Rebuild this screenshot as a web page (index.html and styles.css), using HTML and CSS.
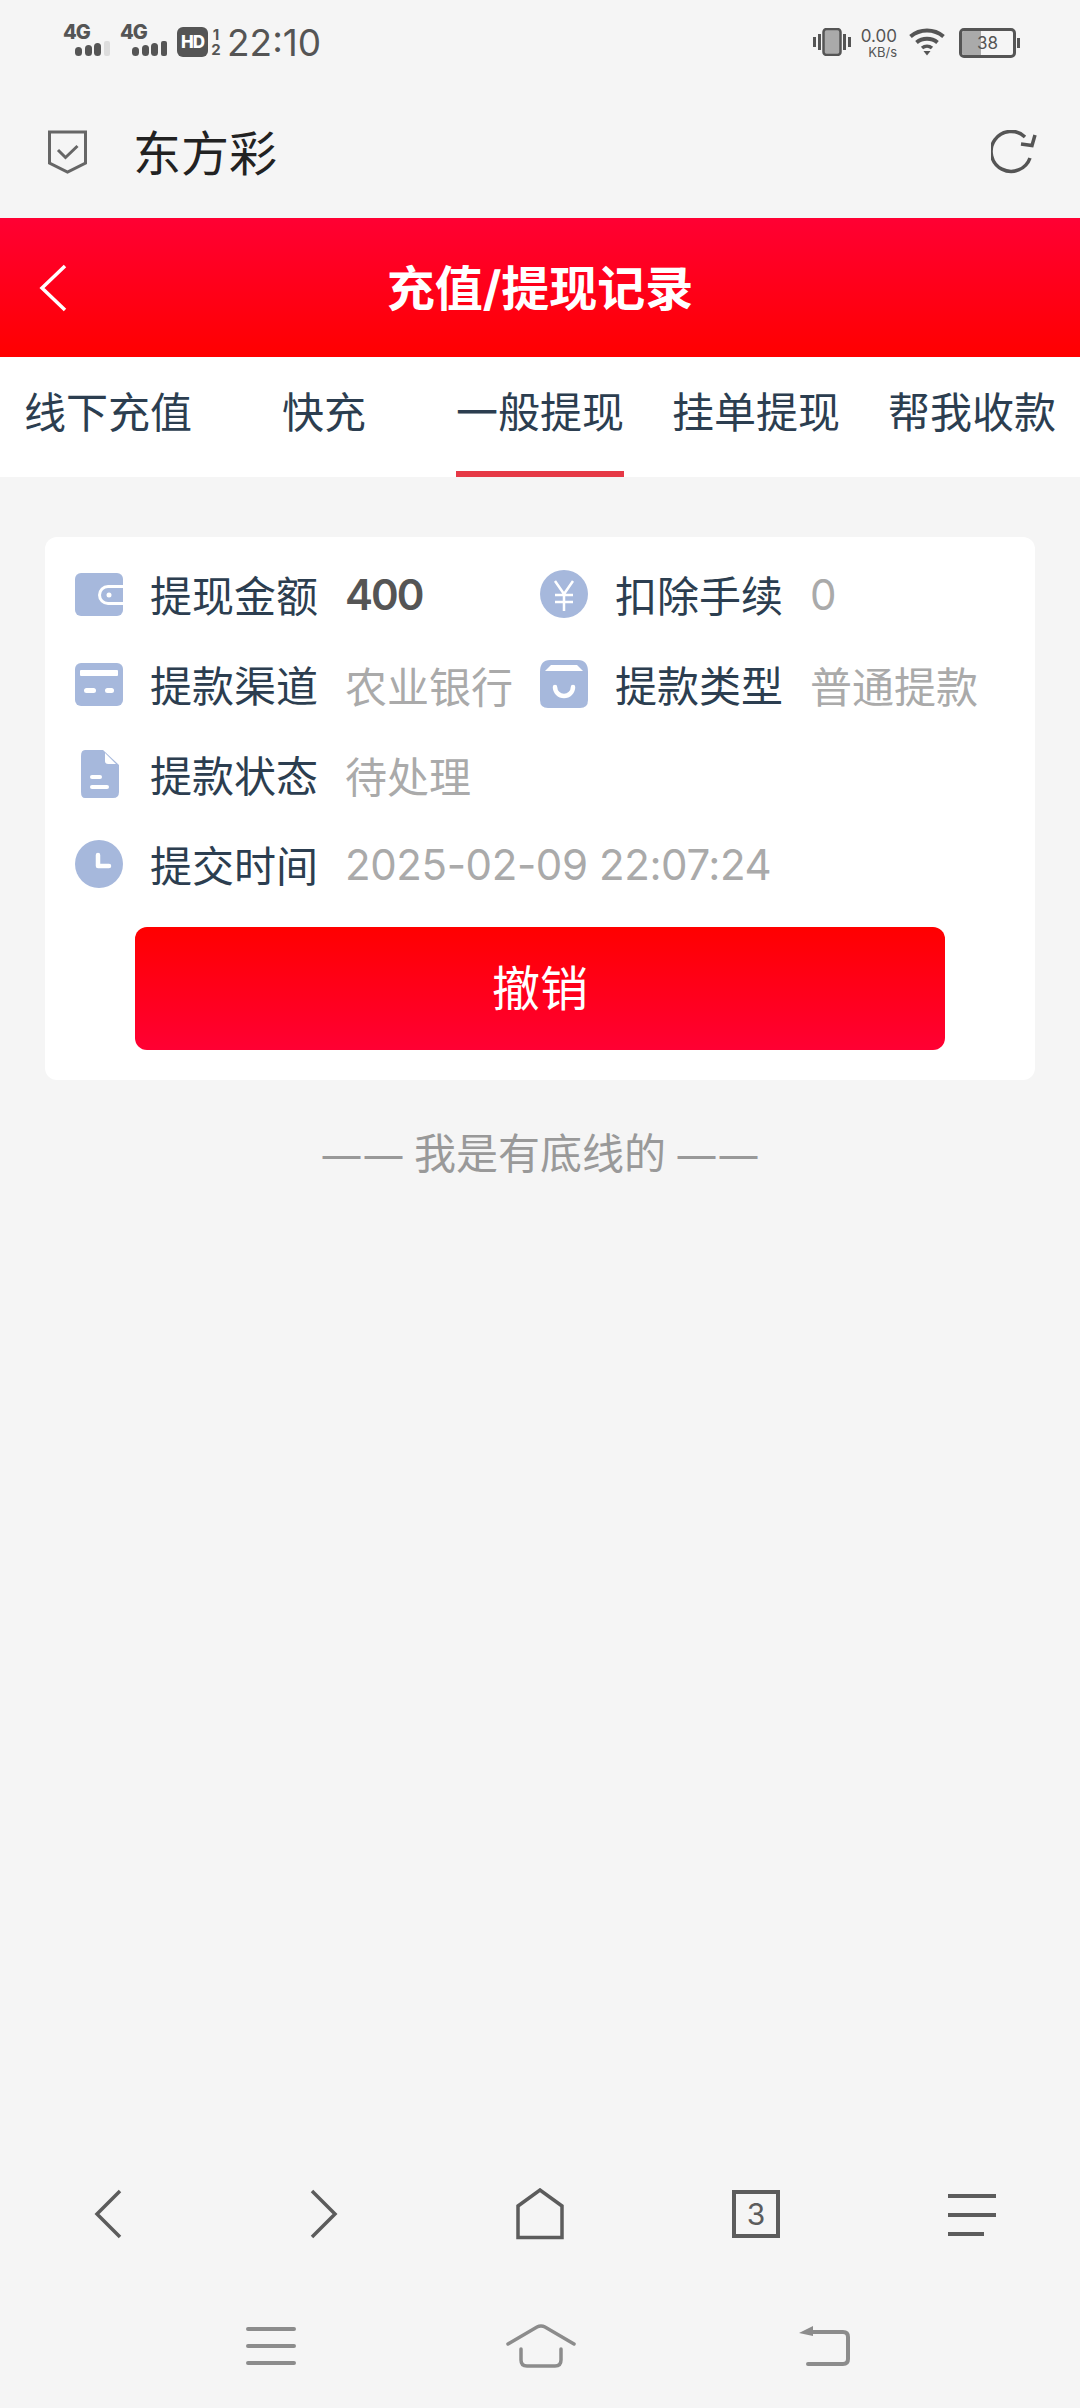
FILE: index.html
```html
<!DOCTYPE html>
<html lang="zh-CN">
<head>
    <meta charset="UTF-8">
    <meta name="viewport" content="width=device-width, initial-scale=1.0">
    <title>充值/提现记录</title>
    <link rel="stylesheet" href="styles.css">
</head>
<body>
<div class="page">
    <div class="statusbar">
        <div class="status-left">
            <div class="signal">
                <span class="signal-type">4G</span>
                <svg class="signal-bars" width="36" height="16" viewBox="0 0 36 16">
                    <rect x="0" y="6" width="7" height="9" rx="3.500" fill="#555"/>
                    <rect x="10" y="4" width="7" height="11" rx="3.500" fill="#555"/>
                    <rect x="19" y="2" width="7" height="13" rx="3.500" fill="#555"/>
                    <rect x="29" y="0" width="6" height="15" rx="2" fill="#ddd"/>
                </svg>
            </div>
            <div class="signal">
                <span class="signal-type">4G</span>
                <svg class="signal-bars" width="36" height="16" viewBox="0 0 36 16">
                    <rect x="0" y="6" width="7" height="9" rx="3.500" fill="#555"/>
                    <rect x="10" y="4" width="7" height="11" rx="3.500" fill="#555"/>
                    <rect x="19" y="2" width="7" height="13" rx="3.500" fill="#555"/>
                    <rect x="29" y="0" width="6" height="15" rx="2" fill="#555"/>
                </svg>
            </div>
            <span class="hd">HD</span>
            <span class="sim"><span>1</span><span>2</span></span>
            <span class="clock">22:10</span>
        </div>
        <div class="status-right">
            <svg width="38" height="28" viewBox="0 0 38 28">
                <rect x="0" y="9" width="3" height="10" fill="#555"/>
                <rect x="5" y="6" width="3" height="16" fill="#555"/>
                <rect x="10.500" y="1" width="17" height="26" rx="3" fill="#aaa" stroke="#555" stroke-width="2.500"/>
                <rect x="30" y="6" width="3" height="16" fill="#555"/>
                <rect x="35" y="9" width="3" height="10" fill="#555"/>
            </svg>
            <div class="speed">
                <span class="speed-num">0.00</span>
                <span class="speed-unit">KB/s</span>
            </div>
            <svg class="wifi" width="36" height="28" viewBox="0 0 36 28">
                <path d="M1.500 8.500 C11 0.500 25 0.500 34.500 8.500" fill="none" stroke="#555" stroke-width="4"/>
                <path d="M7.500 14.500 C13.500 9.500 22.500 9.500 28.500 14.500" fill="none" stroke="#555" stroke-width="4"/>
                <path d="M13 20 C16 17.500 20 17.500 23 20" fill="none" stroke="#555" stroke-width="3.500"/>
                <path d="M14.500 23 L21.500 23 L18 27.500 Z" fill="#555"/>
            </svg>
            <div class="battery">
                <div class="battery-body">
                    <div class="battery-fill"></div>
                    <span class="battery-num">38</span>
                </div>
                <div class="battery-nub"></div>
            </div>
        </div>
    </div>

    <div class="browserbar">
        <svg class="shield" width="39" height="44" viewBox="0 0 39 44">
            <path d="M1.500 2 H37.500 V33 L19.500 42 L1.500 33 Z" fill="none" stroke="#666" stroke-width="3"/>
            <path d="M10 20 L17.500 27.500 L29.500 16" fill="none" stroke="#666" stroke-width="3"/>
        </svg>
        <span class="site-name">东方彩</span>
        <svg class="reload" width="46" height="44" viewBox="0 0 46 44">
            <path d="M39 28 A20 20 0 1 1 34 7" fill="none" stroke="#555" stroke-width="3.500"/>
            <path d="M30 14 L41 15.500 L44 5" fill="none" stroke="#555" stroke-width="3.500"/>
        </svg>
    </div>

    <header class="header">
        <svg class="back" width="30" height="48" viewBox="0 0 30 48">
            <path d="M27 2 L4 24 L27 46" fill="none" stroke="#fff" stroke-width="3.500"/>
        </svg>
        <h1>充值/提现记录</h1>
    </header>

    <nav class="tabs">
        <a class="tab">线下充值</a>
        <a class="tab">快充</a>
        <a class="tab active">一般提现</a>
        <a class="tab">挂单提现</a>
        <a class="tab">帮我收款</a>
    </nav>

    <section class="card">
        <div class="info-grid">
            <div class="info">
                <svg class="icon" width="48" height="43" viewBox="0 0 48 43">
                    <rect width="48" height="43" rx="6" fill="#a6b8dc"/>
                    <path d="M48 12 H33 A8 8 0 0 0 33 32 H48" fill="#fff"/>
                    <path d="M48 15 H33 A5 5 0 0 0 33 29 H48 Z" fill="#a6b8dc"/>
                    <circle cx="34" cy="22" r="2.500" fill="#fff"/>
                </svg>
                <span class="label">提现金额</span>
                <span class="value strong">400</span>
            </div>
            <div class="info">
                <svg class="icon" width="48" height="48" viewBox="0 0 48 48">
                    <circle cx="24" cy="24" r="24" fill="#a6b8dc"/>
                    <path d="M15 11 L24 24 L33 11 M15 25 H33 M15 32 H33 M24 24 V41" fill="none" stroke="#fff" stroke-width="2.500"/>
                </svg>
                <span class="label">扣除手续</span>
                <span class="value">0</span>
            </div>
            <div class="info">
                <svg class="icon" width="48" height="43" viewBox="0 0 48 43">
                    <rect width="48" height="43" rx="6" fill="#a6b8dc"/>
                    <rect x="5" y="7" width="38" height="6" rx="1" fill="#fff"/>
                    <rect x="9" y="25" width="12" height="5" rx="2.500" fill="#fff"/>
                    <rect x="30" y="25" width="9" height="5" rx="2.500" fill="#fff"/>
                </svg>
                <span class="label">提款渠道</span>
                <span class="value">农业银行</span>
            </div>
            <div class="info">
                <svg class="icon" width="48" height="48" viewBox="0 0 48 48">
                    <path d="M10 0 H38 Q48 0 48 12 V40 Q48 48 40 48 H8 Q0 48 0 40 V12 Q0 0 10 0 Z" fill="#a6b8dc"/>
                    <path d="M5 11 L11 5 H37 L43 11 Z" fill="#fff"/>
                    <path d="M15 27 A9 9 0 0 0 33 27" fill="none" stroke="#fff" stroke-width="4.500" stroke-linecap="round"/>
                </svg>
                <span class="label">提款类型</span>
                <span class="value">普通提款</span>
            </div>
            <div class="info wide">
                <svg class="icon" width="48" height="48" viewBox="0 0 48 48">
                    <path d="M10 0 H28 L44 15 V42 Q44 48 38 48 H10 Q6 48 6 42 V6 Q6 0 10 0 Z" fill="#a6b8dc"/>
                    <path d="M30 3 L41 14 H33 Q30 14 30 11 Z" fill="#fff"/>
                    <rect x="15" y="25" width="12" height="4" rx="2" fill="#fff"/>
                    <rect x="15" y="35" width="19" height="4" rx="2" fill="#fff"/>
                </svg>
                <span class="label">提款状态</span>
                <span class="value">待处理</span>
            </div>
            <div class="info wide">
                <svg class="icon" width="48" height="48" viewBox="0 0 48 48">
                    <circle cx="24" cy="24" r="24" fill="#a6b8dc"/>
                    <path d="M23 15 V26 H34" fill="none" stroke="#fff" stroke-width="4.500" stroke-linecap="round" stroke-linejoin="round"/>
                </svg>
                <span class="label">提交时间</span>
                <span class="value date">2025-02-09 22:07:24</span>
            </div>
        </div>
        <button class="cancel-btn"><span>撤销</span></button>
    </section>

    <p class="bottom-line"><span class="dash">——</span> 我是有底线的 <span class="dash">——</span></p>

    <div class="toolbar">
        <svg width="30" height="50" viewBox="0 0 30 50">
            <path d="M27 2 L4 25 L27 48" fill="none" stroke="#5c5c5c" stroke-width="3.500"/>
        </svg>
        <svg width="30" height="50" viewBox="0 0 30 50">
            <path d="M3 2 L26 25 L3 48" fill="none" stroke="#5c5c5c" stroke-width="3.500"/>
        </svg>
        <svg width="48" height="52" viewBox="0 0 48 52">
            <path d="M2 18 L24 2 L46 18 V49.500 H2 Z" fill="none" stroke="#5c5c5c" stroke-width="3.500"/>
        </svg>
        <div class="tab-count">3</div>
        <svg width="48" height="44" viewBox="0 0 48 44">
            <rect y="2" width="48" height="4" fill="#5c5c5c"/>
            <rect y="21" width="48" height="4" fill="#5c5c5c"/>
            <rect y="40" width="36" height="4" fill="#5c5c5c"/>
        </svg>
    </div>

    <div class="navbar">
        <svg width="50" height="38" viewBox="0 0 50 38">
            <path d="M2 2 H48 M2 19 H48 M2 36 H48" stroke="#8c8c8c" stroke-width="4" stroke-linecap="round"/>
        </svg>
        <svg width="70" height="44" viewBox="0 0 70 44">
            <path d="M2 20 L31 3 Q35 1 39 3 L68 20" fill="none" stroke="#8c8c8c" stroke-width="3.500" stroke-linecap="round"/>
            <path d="M15 25 V36 Q15 42 21 42 H49 Q55 42 55 36 V25" fill="none" stroke="#8c8c8c" stroke-width="3.500" stroke-linecap="round"/>
        </svg>
        <svg width="52" height="42" viewBox="0 0 52 42">
            <path d="M10 7 H45 Q50 7 50 12 V34 Q50 39 45 39 H10" fill="none" stroke="#8c8c8c" stroke-width="4" stroke-linecap="round"/>
            <path d="M1 8 L15 1 V11 Z" fill="#8c8c8c"/>
        </svg>
    </div>
</div>
</body>
</html>
```

FILE: styles.css
```css
* {
    margin: 0;
    padding: 0;
    box-sizing: border-box;
}
body {
    background-color: #f5f5f5;
    font-family: Inter, "Noto Sans CJK SC", sans-serif;
}
.page {
    display: flex;
    flex-direction: column;
    width: 1080px;
    height: 2408px;
    overflow: hidden;
}

/* status bar */
.statusbar {
    display: flex;
    justify-content: space-between;
    align-items: flex-start;
    height: 85px;
    padding: 24px 60px 0 63px;
    color: #555;
}
.status-left,
.status-right {
    display: flex;
    align-items: flex-start;
}
.signal {
    display: flex;
    flex-direction: column;
    width: 48px;
    margin-right: 9px;
}
.signal-type {
    font-size: 20px;
    line-height: 17px;
    font-weight: 800;
    letter-spacing: -1px;
}
.signal-bars {
    margin-left: 12px;
}
.hd {
    width: 31px;
    height: 30px;
    margin-top: 3px;
    border-radius: 6px;
    background-color: #555;
    color: #fff;
    font-size: 17px;
    line-height: 30px;
    font-weight: 800;
    text-align: center;
    letter-spacing: -1px;
}
.sim {
    display: flex;
    flex-direction: column;
    align-items: center;
    width: 14px;
    margin: 3px 4px 0 1px;
    font-size: 15px;
    line-height: 15px;
    font-weight: 700;
}
.clock {
    font-size: 37px;
    line-height: 38px;
}
.status-right {
    padding-top: 4px;
}
.speed {
    display: flex;
    flex-direction: column;
    align-items: flex-end;
    width: 38px;
    margin: 0 12px 0 8px;
}
.speed-num {
    font-size: 17px;
    line-height: 17px;
}
.speed-unit {
    font-size: 13px;
    line-height: 15px;
}
.wifi {
    margin-right: 14px;
}
.battery {
    display: flex;
    align-items: center;
}
.battery-body {
    position: relative;
    width: 57px;
    height: 30px;
    border: 3px solid #555;
    border-radius: 5px;
    overflow: hidden;
}
.battery-fill {
    width: 19px;
    height: 100%;
    background-color: #aaa;
}
.battery-num {
    position: absolute;
    top: 0;
    left: 15px;
    font-size: 17px;
    line-height: 24px;
}
.battery-nub {
    width: 3px;
    height: 10px;
    margin-left: 1px;
    background-color: #555;
}

/* browser bar */
.browserbar {
    display: flex;
    align-items: center;
    height: 133px;
    padding: 0 43px 0 48px;
}
.shield {
    margin-right: 46px;
}
.site-name {
    flex: 1;
    margin-top: -4px;
    font-size: 48px;
    color: #222;
}

/* red header */
.header {
    display: grid;
    grid-template-columns: 110px 1fr 110px;
    align-items: center;
    height: 139px;
    background: linear-gradient(#ff0033, #ff0000);
    color: #fff;
}
.back {
    margin-left: 38px;
}
.header h1 {
    margin-top: -5px;
    font-size: 48px;
    font-weight: 700;
    text-align: center;
}

/* tabs */
.tabs {
    display: grid;
    grid-template-columns: repeat(5, 216px);
    justify-content: center;
    height: 120px;
    background-color: #fff;
}
.tab {
    justify-self: center;
    height: 120px;
    font-size: 42px;
    line-height: 112px;
    color: #2c3e50;
}
.tab.active {
    border-bottom: 6px solid #e63946;
}

/* record card */
.card {
    margin: 60px 45px 0;
    padding: 28px 30px 30px;
    height: 543px;
    border-radius: 12px;
    background-color: #fff;
}
.info-grid {
    display: grid;
    grid-template-columns: 465px 1fr;
    grid-auto-rows: 90px;
}
.info {
    display: flex;
    align-items: center;
    height: 58px;
}
.info.wide {
    grid-column: 1 / 3;
}
.icon {
    flex: none;
    margin-right: 27px;
}
.label {
    margin-right: 27px;
    margin-bottom: 2px;
    font-size: 42px;
    color: #2c3e50;
    white-space: nowrap;
}
.value {
    font-size: 42px;
    color: #aaa;
    white-space: nowrap;
}
.value.strong {
    color: #555;
    font-weight: 600;
    letter-spacing: -2px;
}
.value.date {
    letter-spacing: -0.4px;
}
.cancel-btn {
    display: block;
    width: 810px;
    height: 123px;
    margin: 2px auto 0;
    border: none;
    border-radius: 12px;
    background: linear-gradient(#ff0000, #ff0033);
    color: #fff;
    font-family: inherit;
    font-size: 48px;
}
.cancel-btn span {
    display: block;
    margin-top: -7px;
}

/* footer note */
.bottom-line {
    margin-top: 41px;
    font-family: "Noto Sans CJK SC", sans-serif;
    font-size: 42px;
    line-height: 60px;
    color: #999;
    text-align: center;
}
.dash {
    font-family: "DejaVu Sans", sans-serif;
}

/* bottom toolbars */
.toolbar {
    display: grid;
    grid-template-columns: repeat(5, 216px);
    justify-items: center;
    align-items: center;
    margin-top: auto;
    margin-bottom: 20px;
    height: 100px;
}
.tab-count {
    width: 48px;
    height: 48px;
    border: 4px solid #5c5c5c;
    font-size: 30px;
    line-height: 40px;
    color: #5c5c5c;
    text-align: center;
}
.navbar {
    display: flex;
    align-items: center;
    height: 124px;
    padding-left: 246px;
}
.navbar svg:nth-child(1) {
    margin-right: 210px;
}
.navbar svg:nth-child(2) {
    margin-right: 222px;
}
```
